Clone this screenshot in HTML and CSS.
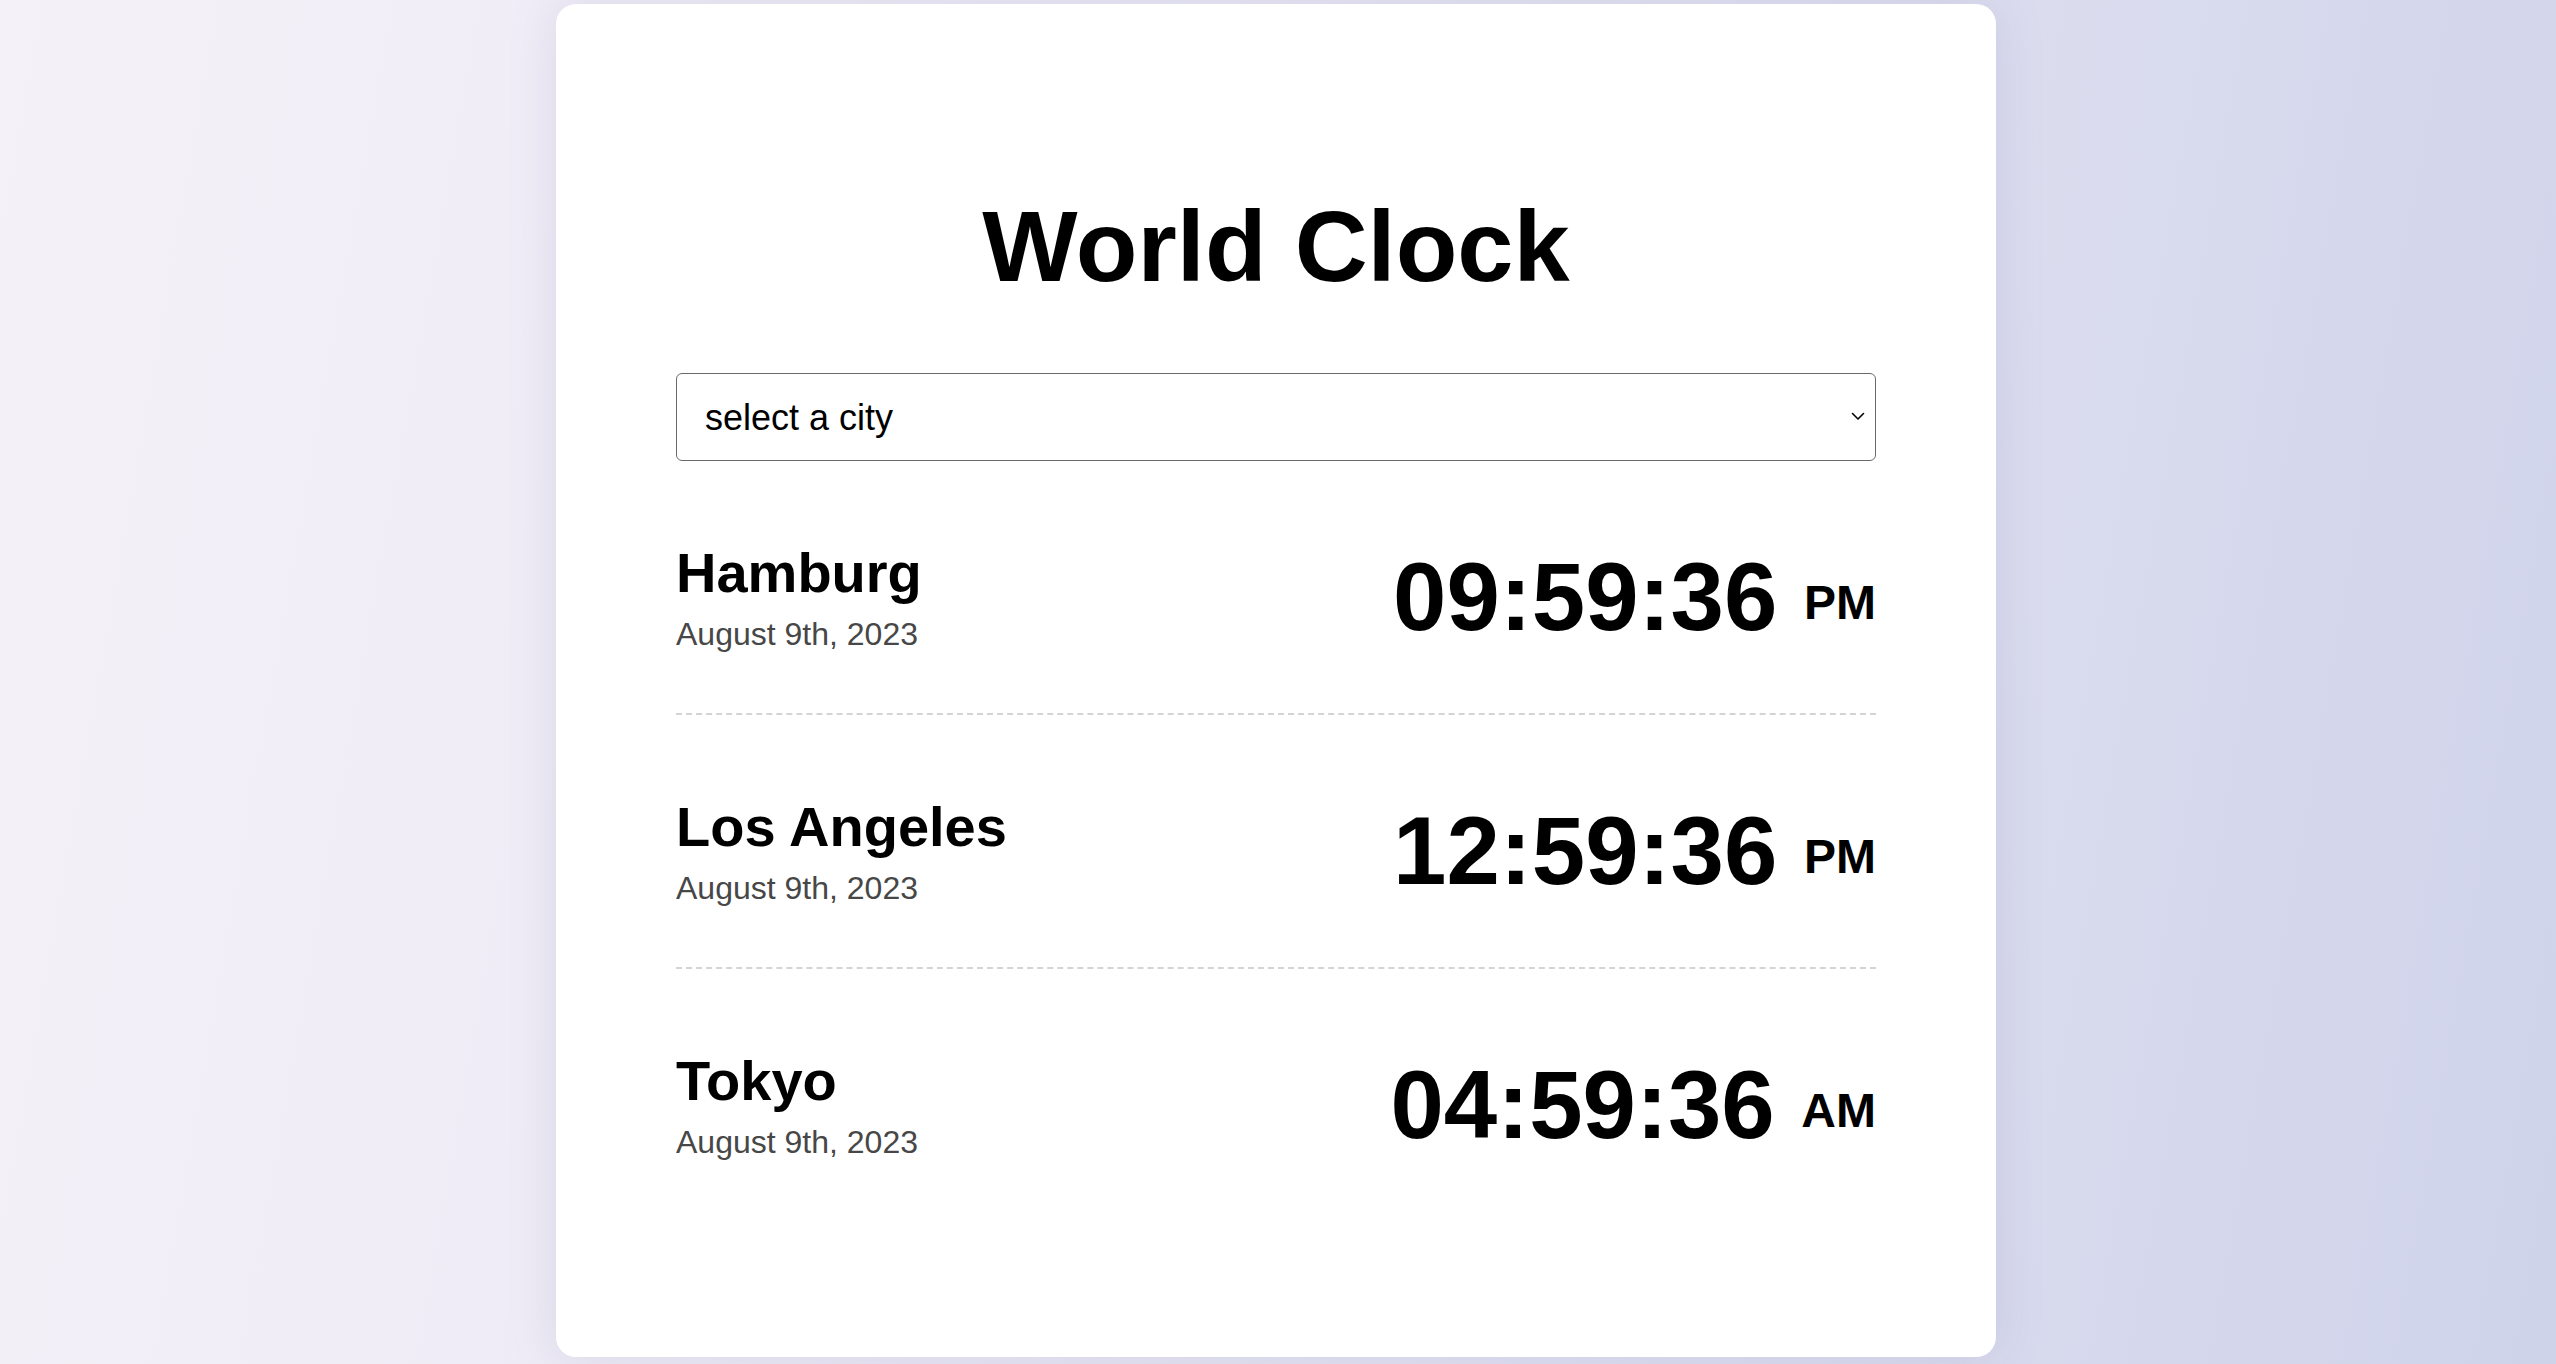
FILE: index.html
```html
<!DOCTYPE html>
<html lang="en">
<head>
<meta charset="utf-8">
<title>World Clock</title>
<link rel="stylesheet" href="styles.css">
</head>
<body>
<main class="page">
  <section class="card">
    <h1 class="title">World Clock</h1>
    <div class="select-wrap">
      <select class="city-select">
        <option>select a city</option>
      </select>
      <svg class="select-arrow" width="14" height="9" viewBox="0 0 14 9" aria-hidden="true">
        <path d="M1.5 1.5 L7 7 L12.5 1.5" fill="none" stroke="#000" stroke-width="1.6" stroke-linecap="round" stroke-linejoin="round"/>
      </svg>
    </div>
    <div class="cities">
      <div class="city">
        <div class="city-info">
          <h2 class="city-name">Hamburg</h2>
          <div class="city-date">August 9th, 2023</div>
        </div>
        <div class="city-time">09:59:36 <small class="meridiem">PM</small></div>
      </div>
      <div class="city">
        <div class="city-info">
          <h2 class="city-name">Los Angeles</h2>
          <div class="city-date">August 9th, 2023</div>
        </div>
        <div class="city-time">12:59:36 <small class="meridiem">PM</small></div>
      </div>
      <div class="city">
        <div class="city-info">
          <h2 class="city-name">Tokyo</h2>
          <div class="city-date">August 9th, 2023</div>
        </div>
        <div class="city-time">04:59:36 <small class="meridiem">AM</small></div>
      </div>
    </div>
  </section>
</main>
</body>
</html>
```

FILE: styles.css
```css
html, body {
  margin: 0;
  padding: 0;
}

body {
  min-height: 100vh;
  font-family: "Liberation Sans", Arial, Helvetica, sans-serif;
  color: #000;
  background: linear-gradient(100deg, #f5f1f8 0%, #eeebf6 30%, #dddeef 68%, #cfd3ea 100%);
}

.page {
  display: flex;
  justify-content: center;
  padding: 4px 4px 0 0;
}

.card {
  width: 1440px;
  box-sizing: border-box;
  background: #fff;
  border-radius: 20px;
  padding: 120px 120px 136px;
  box-shadow: 0 0 48px rgba(120, 115, 170, 0.18);
}

.title {
  margin: 65px 0 69px;
  font-size: 101px;
  font-weight: 700;
  text-align: center;
  line-height: normal;
}

.select-wrap {
  position: relative;
}

.city-select {
  display: block;
  width: 100%;
  height: 88px;
  box-sizing: border-box;
  margin: 0;
  padding: 0 40px 0 28px;
  font-family: "Liberation Sans", Arial, Helvetica, sans-serif;
  font-size: 36px;
  color: #000;
  background-color: #fff;
  border: 1px solid #6a6a6a;
  border-radius: 6px;
  -webkit-appearance: none;
  appearance: none;
}

.select-arrow {
  position: absolute;
  right: 11px;
  top: 39px;
  pointer-events: none;
}

.city {
  display: flex;
  justify-content: space-between;
  align-items: center;
  padding: 79px 0 60px;
  border-bottom: 2px dashed #d4d4d4;
}

.city:last-child {
  border-bottom: none;
}

.city-info {
  display: flex;
  flex-direction: column;
}

.city-name {
  margin: 0 0 11px;
  font-size: 56px;
  font-weight: 700;
  line-height: normal;
}

.city-date {
  font-size: 32px;
  color: #474747;
  line-height: normal;
}

.city-time {
  font-size: 96px;
  font-weight: 700;
  line-height: normal;
  white-space: nowrap;
}

.meridiem {
  font-size: 48px;
  vertical-align: 11px;
}
```
